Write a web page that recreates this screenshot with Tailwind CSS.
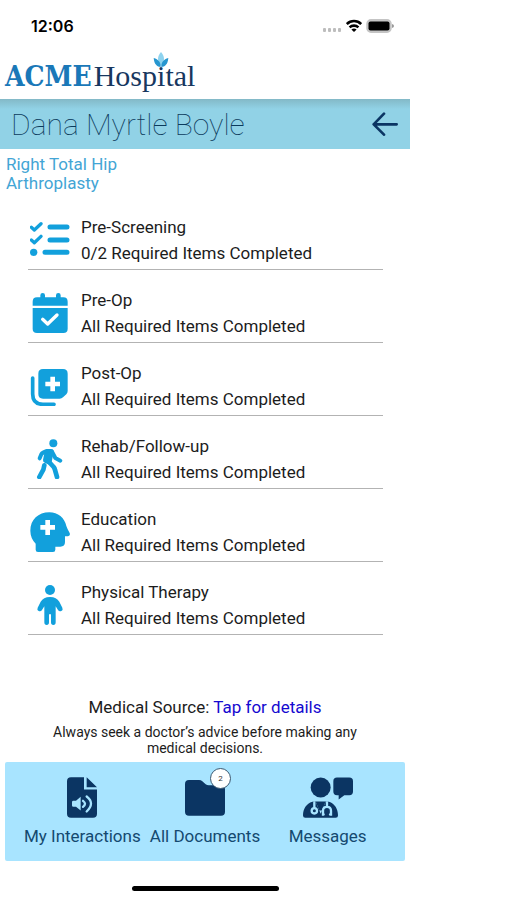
<!DOCTYPE html>
<html lang="en">

<head>
 <meta charset="UTF-8">
 <meta name="viewport" content="width=device-width, initial-scale=1.0">
 <title>ACME Hospital</title>
 <script src="https://cdn.jsdelivr.net/npm/@tailwindcss/browser@4"></script>
</head>

<body class="bg-white min-h-screen font-['Roboto',sans-serif] text-[17px] text-[#1c1c1c]">
 <div class="w-full max-w-[410px]">

  <!-- status bar -->
  <div class="flex h-[52px] items-center justify-between pl-[31px] pr-4 text-black">
   <span class="font-['Inter',sans-serif] text-base font-semibold">12:06</span>
   <div class="flex items-center gap-1">
    <svg class="h-4 w-5" viewBox="0 0 20 16" fill="#bdbdbd" aria-hidden="true">
     <rect x="1" y="10" width="3" height="4" rx="1" /><rect x="6" y="10" width="3" height="4" rx="1" /><rect x="11" y="10" width="3" height="4" rx="1" /><rect x="16" y="10" width="3" height="4" rx="1" />
    </svg>
    <svg class="h-4 w-4" viewBox="0 0 16 16" fill="none" stroke="#000" stroke-width="2.6" aria-hidden="true">
     <path d="M.8 6a10.3 10.3 0 0 1 14.4 0M3.6 9.4a6.3 6.3 0 0 1 8.8 0" />
     <path d="M5.4 11.6a3.8 3.8 0 0 1 5.2 0L8 14z" fill="#000" stroke="none" />
    </svg>
    <svg class="h-4 w-7" viewBox="0 0 28 16" aria-hidden="true">
     <rect x="1" y="1.8" width="24" height="12.4" rx="4" fill="#c4c4c4" stroke="#c4c4c4" stroke-width="1.5" />
     <rect x="2.5" y="3.5" width="21" height="9" rx="2" />
     <path d="M26 6v4q2-.5 2-2t-2-2" fill="#999" />
    </svg>
   </div>
  </div>

  <!-- logo -->
  <div class="flex h-[47px] items-center pl-[5px]">
   <a href="#" class="relative flex items-baseline leading-[47px]">
    <span class="font-['DejaVu_Serif_Condensed','DejaVu_Serif',serif] text-[28px] font-bold text-[#1a78b8]">ACME</span>
    <span class="pl-[2px] font-['Liberation_Serif',serif] text-[30px] text-[#17375f]">Hospital</span>
    <svg class="absolute right-[26px] top-0 h-4 w-4" viewBox="0 0 48 48" aria-hidden="true">
     <path d="M24 0C12 14 12 28 24 42C36 28 36 14 24 0" fill="#8ed3ef" />
     <path d="M2 18C4 38 12 44 23 45C24 32 16 22 2 18" fill="#2796cf" />
     <path d="M46 18C44 38 36 44 25 45C24 32 32 22 46 18" fill="#2796cf" />
    </svg>
   </a>
  </div>

  <header class="flex h-[50px] items-center justify-between bg-[#91d2e6] bg-linear-to-b from-[#83b9c7] to-[#91d2e6] to-20% pl-[11px] pr-3">
   <h1 class="text-[30px] font-thin text-[#0b3a5c]">Dana Myrtle Boyle</h1>
   <button type="button" aria-label="Back">
    <svg class="h-6 w-[26px]" viewBox="0 0 78 72" fill="none" stroke="#0b3563" stroke-width="8" stroke-linecap="round" stroke-linejoin="round">
     <path d="M74 37H5M36 5L5 37L36 68" />
    </svg>
   </button>
  </header>

  <p class="w-[130px] pl-[6px] pt-[6px] pb-1 leading-[19px] text-[#43a5d5]">Right Total Hip Arthroplasty</p>

  <ul class="pl-7 pr-[27px]">
   <li>
    <a href="#" class="flex items-center gap-[11px] border-b border-[#b3b3b3] pl-[2px] pt-[17px] pb-[3px]">
     <svg class="size-10" viewBox="0 0 120 120" fill="none" stroke="#12a0dc" stroke-linecap="round" aria-hidden="true">
      <path d="M4 22L13 30L33 11M4 60L13 68L33 49" stroke-width="10" stroke-linejoin="round" />
      <path d="M60 21H111M60 60H111M45 97H111" stroke-width="15" />
      <circle cx="11" cy="97" r="11" fill="#12a0dc" stroke="none" />
     </svg>
     <div class="leading-[26px]">
      <h2>Pre-Screening</h2>
      <p>0/2 Required Items Completed</p>
     </div>
    </a>
   </li>
   <li>
    <a href="#" class="flex items-center gap-[11px] border-b border-[#b3b3b3] pl-[2px] pt-[17px] pb-[3px]">
     <svg class="size-10" viewBox="0 0 120 120" fill="#12a0dc" aria-hidden="true">
      <path d="M31 13V7q0-7 7-7t7 7v6H78V7q0-7 7-7t7 7v6h8q13 0 13 13V38H8V26q0-13 13-13z" />
      <path d="M8 45H113V107q0 13-13 13H21q-13 0-13-13z" />
      <path d="M38 79L53 93L81 66" fill="none" stroke="#fff" stroke-width="10" stroke-linecap="round" stroke-linejoin="round" />
     </svg>
     <div class="leading-[26px]">
      <h2>Pre-Op</h2>
      <p>All Required Items Completed</p>
     </div>
    </a>
   </li>
   <li>
    <a href="#" class="flex items-center gap-[11px] border-b border-[#b3b3b3] pl-[2px] pt-[17px] pb-[3px]">
     <svg class="size-10" viewBox="0 0 120 120" fill="#12a0dc" aria-hidden="true">
      <path d="M39 9H99q14 0 14 14V75q0 6-4 10L99 94q-4 4-10 4H39q-14 0-14-14V23q0-14 14-14" />
      <path d="M61 32H75V47H90V61H75V76H61V61H46V47H61z" fill="#fff" />
      <path d="M8 36V84q0 31 31 31H72" fill="none" stroke="#12a0dc" stroke-width="11" stroke-linecap="round" />
     </svg>
     <div class="leading-[26px]">
      <h2>Post-Op</h2>
      <p>All Required Items Completed</p>
     </div>
    </a>
   </li>
   <li>
    <a href="#" class="flex items-center gap-[11px] border-b border-[#b3b3b3] pl-[2px] pt-[17px] pb-[3px]">
     <svg class="size-10" viewBox="0 0 120 120" fill="#12a0dc" stroke="#12a0dc" stroke-linecap="round" stroke-linejoin="round" aria-hidden="true">
      <circle cx="70" cy="13" r="12" stroke="none" />
      <path d="M52 38L63 38L57 68L47 64z" stroke-width="16" />
      <path d="M29 58L34 46Q38 39 52 36M66 38L76 57L91 65" fill="none" stroke-width="12" />
      <path d="M56 68L71 84Q74 88 75 93L81 114M43 79L40 92L28 114" fill="none" stroke-width="14" />
     </svg>
     <div class="leading-[26px]">
      <h2>Rehab/Follow-up</h2>
      <p>All Required Items Completed</p>
     </div>
    </a>
   </li>
   <li>
    <a href="#" class="flex items-center gap-[11px] border-b border-[#b3b3b3] pl-[2px] pt-[17px] pb-[3px]">
     <svg class="size-10" viewBox="0 0 120 120" fill="#12a0dc" aria-hidden="true">
      <path d="M24 120q-7 0-7-7V95C7 85 1 72 1 56C1 23 25 1 58 1C84 1 104 18 109 42Q112 51 119 63Q122 71 114 73H105V90q0 14-14 14H76V113q0 7-7 7z" />
      <path d="M46 24H60V39H75V53H60V69H46V53H31V39H46z" fill="#fff" />
     </svg>
     <div class="leading-[26px]">
      <h2>Education</h2>
      <p>All Required Items Completed</p>
     </div>
    </a>
   </li>
   <li>
    <a href="#" class="flex items-center gap-[11px] border-b border-[#b3b3b3] pl-[2px] pt-[17px] pb-[3px]">
     <svg class="size-10" viewBox="0 0 120 120" fill="#12a0dc" aria-hidden="true">
      <circle cx="60" cy="15" r="15" />
      <path d="M60 36C74 36 82 41 88 50L97 68Q100 75 94 78Q88 81 84 75L77 64V112q0 8-7 8t-7-8V88H57V112q0 8-7 8t-7-8V64L36 75Q32 81 26 78Q20 75 23 68L32 50C38 41 46 36 60 36" />
     </svg>
     <div class="leading-[26px]">
      <h2>Physical Therapy</h2>
      <p>All Required Items Completed</p>
     </div>
    </a>
   </li>
  </ul>

  <div class="mt-[60px] px-10 text-center">
   <p class="leading-6">Medical Source: <a href="#" class="text-[#1509d0]">Tap for details</a></p>
   <p class="mt-[5px] text-[14px] leading-4">Always seek a doctor’s advice before making any medical decisions.</p>
  </div>

  <nav class="mx-[5px] mt-[6px] grid h-[99px] grid-cols-3 rounded-xs bg-[#a8e4ff] px-4 pt-[15px] text-center text-[#14496f]">
   <a href="#" class="flex flex-col items-center gap-[6px] whitespace-nowrap">
    <svg class="h-[41px] w-[30px]" viewBox="0 0 90 122" fill="#0b3563" aria-hidden="true">
     <path d="M12 0H51V37H90V110q0 12-12 12H12q-12 0-12-12V12Q0 0 12 0M59 0L90 30H59z" />
     <g fill="#a8e4ff">
      <path d="M19 71H27L41 59V100L27 89H19q-4 0-4-4V75q0-4 4-4" />
      <path d="M48 71q12 9 0 18M59 58Q85 78 59 103" fill="none" stroke="#a8e4ff" stroke-width="7" stroke-linecap="round" />
     </g>
    </svg>
    <span class="leading-6">My Interactions</span>
   </a>
   <a href="#" class="flex flex-col items-center gap-[6px] whitespace-nowrap">
    <span class="relative flex h-[41px] items-center">
     <svg class="h-9 w-10" viewBox="0 0 120 108" fill="#0b3563" aria-hidden="true">
      <path d="M12 0H42q6 0 10 4L62 13q4 3 9 3H108q12 0 12 12V95q0 12-12 12H12q-12 0-12-12V12Q0 0 12 0" />
     </svg>
     <span class="absolute -right-[6px] -top-[9px] flex size-[21px] items-center justify-center rounded-full border border-[#3b5870] bg-white text-[8px] text-[#333]">2</span>
    </span>
    <span class="leading-6">All Documents</span>
   </a>
   <a href="#" class="flex flex-col items-center gap-[6px] whitespace-nowrap">
    <svg class="h-[41px] w-[50px]" viewBox="0 0 150 122" fill="#0b3563" aria-hidden="true">
     <circle cx="53" cy="31" r="30" />
     <path d="M102 1H139q11 0 11 11V43q0 11-11 11H124L107 67V54H102q-11 0-11-11V12q0-11 11-11" />
     <path d="M28 74L38 73L53 110L68 73L78 74C95 79 105 96 105 115q0 7-7 7H7q-7 0-7-7C0 96 10 79 28 74" />
     <path d="M38 73H68L57 100H49z" />
     <g fill="none" stroke="#a8e4ff" stroke-width="7" stroke-linecap="round">
      <path d="M34 76V91M72 76V88M62 112H60V101q0-12 12-12t12 12V112H81" />
      <circle cx="34" cy="101" r="8" />
     </g>
    </svg>
    <span class="leading-6">Messages</span>
   </a>
  </nav>

  <div class="flex justify-center pt-[25px] pb-2">
   <div class="h-[5px] w-[147px] rounded-full bg-black"></div>
  </div>
 </div>
</body>

</html>
